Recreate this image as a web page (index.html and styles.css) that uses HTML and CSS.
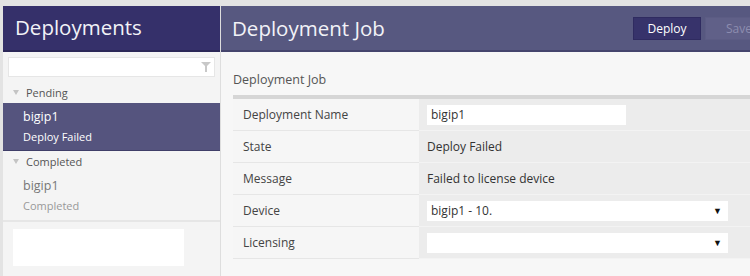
FILE: index.html
```html
<!DOCTYPE html>
<html lang="en">
<head>
  <meta charset="UTF-8">
  <title>Deployments</title>
  <link rel="stylesheet" href="styles.css">
</head>
<body>

<div class="app">
  <div class="sidebar">
    <div class="sidebar-head">Deployments</div>

    <div class="search">
      <input type="text">
      <svg class="filter" width="10" height="10" viewBox="0 0 10 10"><path d="M0 0H10L6 4V10H4V4Z" fill="#c8c8c8"/></svg>
    </div>

    <div class="group"><span class="caret"></span>Pending</div>
    <div class="item active">
      <div class="item-name">bigip1</div>
      <div class="item-state">Deploy Failed</div>
    </div>

    <div class="group"><span class="caret"></span>Completed</div>
    <div class="item">
      <div class="item-name">bigip1</div>
      <div class="item-state">Completed</div>
    </div>

    <div class="sidebar-foot">
      <div class="blank"></div>
    </div>
  </div>

  <div class="main">
    <div class="main-head">
      <h1>Deployment Job</h1>
      <div class="actions">
        <button class="btn">Deploy</button>
        <button class="btn disabled">Save</button>
      </div>
    </div>

    <div class="content">
      <h2>Deployment Job</h2>
      <table class="form">
        <tr>
          <td class="label">Deployment Name</td>
          <td class="value"><input class="field" type="text" value="bigip1"></td>
        </tr>
        <tr>
          <td class="label">State</td>
          <td class="value">Deploy Failed</td>
        </tr>
        <tr>
          <td class="label">Message</td>
          <td class="value">Failed to license device</td>
        </tr>
        <tr>
          <td class="label">Device</td>
          <td class="value"><div class="select">bigip1 - 10.<span class="arrow">&#9660;</span></div></td>
        </tr>
        <tr>
          <td class="label">Licensing</td>
          <td class="value"><div class="select"><span class="arrow">&#9660;</span></div></td>
        </tr>
      </table>
    </div>
  </div>
</div>

</body>
</html>
```

FILE: styles.css
```css
body {
  margin: 0;
  background-color: #e3e3e3;
  font-family: 'Open Sans', Arial, sans-serif;
  font-size: 12px;
  color: #333;
  overflow: hidden;
}

.app {
  display: flex;
  margin: 6px 0 0 3px;
  height: 270px;
}

/* left column */
.sidebar {
  width: 217px;
  flex-shrink: 0;
  background-color: #f4f4f4;
  border-right: 1px solid #dedede;
}

.sidebar-head {
  height: 44px;
  background-color: #35306a;
  border-bottom: 2px solid #2b2757;
  color: #f2f2f7;
  font-size: 20.5px;
  line-height: 42px;
  padding-left: 12px;
}

.search {
  position: relative;
  margin: 5px 5px 5px 5px;
}

.search input {
  display: block;
  width: 100%;
  height: 20px;
  box-sizing: border-box;
  border: 1px solid #e6e6e6;
  background-color: #fff;
}

.filter {
  position: absolute;
  right: 4px;
  top: 5px;
}

.group {
  display: flex;
  align-items: center;
  height: 21px;
  padding-left: 10px;
  font-size: 11px;
  color: #555;
}

.caret {
  width: 0;
  height: 0;
  border-left: 3px solid transparent;
  border-right: 3px solid transparent;
  border-top: 5px solid #c4c4c4;
  margin-right: 7px;
}

.item {
  height: 48px;
  padding-left: 20px;
  box-sizing: border-box;
  padding-top: 4px;
}

.item-name {
  font-size: 12.5px;
  line-height: 20px;
  color: #777;
}

.item-state {
  font-size: 11px;
  line-height: 20px;
  color: #999;
}

.item.active {
  background-color: #55547e;
  border-bottom: 1px solid #3f3e68;
}

.item.active .item-name,
.item.active .item-state {
  color: #fff;
}

.sidebar-foot {
  border-top: 2px solid #e6e6e6;
  padding: 7px 0 0 10px;
}

.blank {
  width: 171px;
  height: 37px;
  background-color: #fff;
}

/* right column */
.main {
  flex: 1;
  background-color: #f7f7f7;
  min-width: 0;
}

.main-head {
  display: flex;
  align-items: center;
  justify-content: space-between;
  height: 44px;
  background-color: #575880;
  border-bottom: 2px solid #45456d;
  padding-left: 11px;
}

h1 {
  margin: 0;
  font-size: 20.5px;
  font-weight: normal;
  color: #f2f2f7;
}

.actions {
  display: flex;
  gap: 4px;
  margin-right: -23px;
}

.btn {
  width: 68px;
  height: 23px;
  border: 1px solid #2f2b60;
  background-color: #37336b;
  color: #fff;
  font-family: inherit;
  font-size: 12px;
  padding: 0;
}

.btn.disabled {
  background-color: #606088;
  border-color: #5c5c84;
  color: #8d8daf;
}

.content {
  padding: 18px 0 0 12px;
}

h2 {
  margin: 0 0 5px 0;
  font-size: 12.5px;
  font-weight: normal;
  color: #555;
  line-height: 20px;
}

.form {
  width: 100%;
  border-collapse: collapse;
  border-top: 4px solid #d6d6d6;
}

.form td {
  height: 31px;
  padding: 0;
  border-bottom: 1px solid #e6e6e6;
}

.label {
  width: 176px;
  padding-left: 10px !important;
  background-color: #f6f6f6;
  color: #444;
}

.value {
  background-color: #ececec;
  padding-left: 8px !important;
  color: #333;
  border-bottom-color: #f3f3f3 !important;
}

.field {
  display: block;
  width: 199px;
  height: 20px;
  box-sizing: border-box;
  border: none;
  background-color: #fff;
  font-family: inherit;
  font-size: 12px;
  color: #333;
  padding: 0 4px;
}

.select {
  position: relative;
  width: 301px;
  height: 20px;
  box-sizing: border-box;
  background-color: #fff;
  line-height: 20px;
  padding-left: 4px;
}

.arrow {
  position: absolute;
  right: 6px;
  top: 0;
  font-size: 9px;
  color: #111;
}
```
